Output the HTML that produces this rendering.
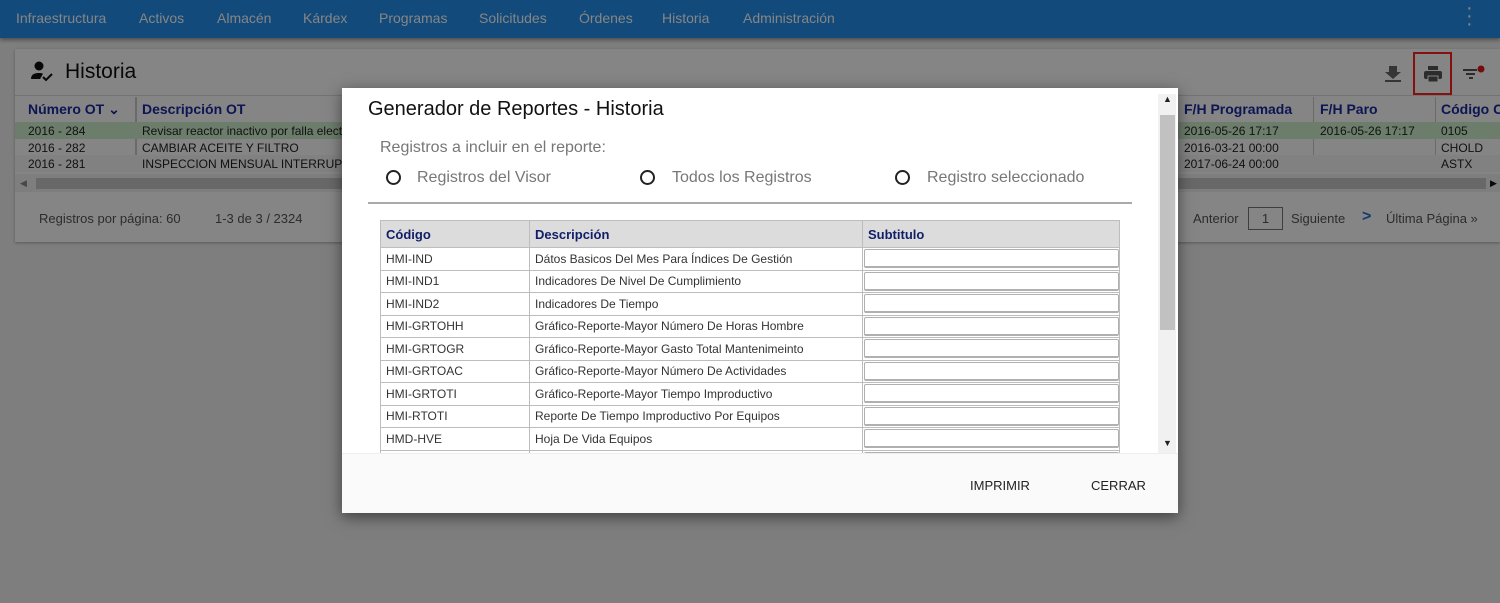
<!DOCTYPE html>
<html><head><meta charset="utf-8"><style>
*{box-sizing:border-box;margin:0;padding:0}
html,body{width:1500px;height:603px;overflow:hidden;background:#7a7a7a}
body{font-family:"Liberation Sans",sans-serif;position:relative}
.a{position:absolute;white-space:nowrap}
.page{left:0;top:0;width:1500px;height:603px;background:#f2f2f2}
.nav{left:0;top:0;width:1500px;height:38px;background:#218eeb;box-shadow:0 2px 4px rgba(0,0,0,.4)}
.nav span{position:absolute;top:10px;font-size:14px;color:#fff}
.card{left:15px;top:49px;width:1485px;height:193px;background:#fff;box-shadow:0 1px 3px rgba(0,0,0,.3)}
.hd{font-size:14px;color:#1a2aa0;font-weight:bold}
.cell{font-size:12px;color:#222}
.ov{left:0;top:0;width:1500px;height:603px;background:rgba(0,0,0,.48)}
.modal{left:342px;top:88px;width:836px;height:425px;background:#fff;box-shadow:0 4px 14px rgba(0,0,0,.5)}
.t td{border:1px solid #bdbdbd;font-size:12px;color:#333;height:22.5px;padding:0 5px}
.t{border-collapse:collapse;position:absolute;left:38px;top:132px;width:740px}
.t th{background:#dcdcdc;color:#101e68;font-size:13px;text-align:left;padding:0 5px;height:27px;border:1px solid #bdbdbd}
.inp{height:19px;border:1px solid #b0b0b0;border-bottom:2px solid #b0b0b0;border-radius:2px;margin:0 -5px 0 -4px}
.radio{width:15px;height:15px;border:2px solid #222;border-radius:50%}
</style></head><body>
<div class="a page"></div>
<div class="a nav">
<span style="left:16px">Infraestructura</span><span style="left:139px">Activos</span><span style="left:217px">Almacén</span><span style="left:303px">Kárdex</span><span style="left:379px">Programas</span><span style="left:479px">Solicitudes</span><span style="left:579px">Órdenes</span><span style="left:662px">Historia</span><span style="left:743px">Administración</span>
<span style="left:1466px;top:4px;font-size:20px;line-height:8px;color:#fff">·<br>·<br>·</span>
</div>
<div class="a card"></div>
<svg class="a" style="left:30px;top:60px" width="24" height="22" viewBox="0 0 24 22"><circle cx="9" cy="6" r="4.5" fill="#111"/><path d="M1 19c0-5 4-6 8-6 2 0 3 .3 4 .7L10 19z" fill="#111"/><path d="M13 17l3 3 6-6" stroke="#111" stroke-width="2" fill="none"/></svg>
<div class="a" style="left:65px;top:60px;font-size:21px;color:#111">Historia</div>
<svg class="a" style="left:1384px;top:65px" width="18" height="18"><path d="M5 1h8v6h4l-8 7-8-7h4z" fill="#666"/><rect x="1" y="15" width="16" height="2" fill="#666"/></svg>
<div class="a" style="left:1413px;top:52px;width:39px;height:43px;border:2px solid #ff2020"></div>
<svg class="a" style="left:1423px;top:65px" width="20" height="18"><rect x="5" y="1" width="10" height="4" fill="#555"/><rect x="1" y="6" width="18" height="8" rx="2" fill="#555"/><rect x="5" y="11" width="10" height="6" fill="#555" stroke="#fff"/></svg>
<svg class="a" style="left:1462px;top:64px" width="24" height="18"><rect x="1" y="5" width="14" height="2" fill="#555"/><rect x="4" y="9" width="9" height="2" fill="#555"/><rect x="7" y="13" width="4" height="2" fill="#555"/><circle cx="19" cy="5" r="3.5" fill="#e01818"/></svg>
<div class="a" style="left:15px;top:95px;width:1485px;height:27px;border-top:1px solid #ddd;background:#fff"></div>
<div class="a hd" style="left:28px;top:101px">Número OT ⌄</div>
<div class="a" style="left:135px;top:97px;width:2px;height:75px;background:#ccc"></div>
<div class="a hd" style="left:142px;top:101px">Descripción OT</div>
<div class="a hd" style="left:1184px;top:101px">F/H Programada</div>
<div class="a hd" style="left:1320px;top:101px">F/H Paro</div>
<div class="a hd" style="left:1441px;top:101px">Código C</div>
<div class="a" style="left:1313px;top:97px;width:1px;height:75px;background:#ccc"></div>
<div class="a" style="left:1435px;top:97px;width:1px;height:75px;background:#ccc"></div>
<div class="a" style="left:15px;top:122px;width:1485px;height:17px;background:#d0f0d0"></div>
<div class="a" style="left:15px;top:155px;width:1485px;height:17px;background:#f7f7f7"></div>
<div class="a cell" style="left:28px;top:124px">2016 - 284</div><div class="a cell" style="left:142px;top:124px">Revisar reactor inactivo por falla electr</div>
<div class="a cell" style="left:28px;top:141px">2016 - 282</div><div class="a cell" style="left:142px;top:141px">CAMBIAR ACEITE Y FILTRO</div>
<div class="a cell" style="left:28px;top:157px">2016 - 281</div><div class="a cell" style="left:142px;top:157px">INSPECCION MENSUAL INTERRUPTOR</div>
<div class="a cell" style="left:1184px;top:124px">2016-05-26 17:17</div><div class="a cell" style="left:1320px;top:124px">2016-05-26 17:17</div><div class="a cell" style="left:1441px;top:124px">0105</div>
<div class="a cell" style="left:1184px;top:141px">2016-03-21 00:00</div><div class="a cell" style="left:1441px;top:141px">CHOLD</div>
<div class="a cell" style="left:1184px;top:157px">2017-06-24 00:00</div><div class="a cell" style="left:1441px;top:157px">ASTX</div>
<div class="a" style="left:15px;top:174px;width:1485px;height:18px;background:#f1f1f1"></div>
<div class="a" style="left:36px;top:178px;width:1450px;height:11px;background:#c8c8c8"></div>
<div class="a" style="left:20px;top:178px;font-size:9px;color:#888">◀</div>
<div class="a" style="left:1490px;top:178px;font-size:9px;color:#111">▶</div>
<div class="a" style="left:39px;top:211px;font-size:13px;color:#555">Registros por página: 60</div>
<div class="a" style="left:215px;top:211px;font-size:13px;color:#555">1-3 de 3 / 2324</div>
<div class="a" style="left:1193px;top:211px;font-size:13px;color:#555">Anterior</div>
<div class="a" style="left:1248px;top:207px;width:35px;height:23px;border:1px solid #777;font-size:13px;color:#555;text-align:center;line-height:21px">1</div>
<div class="a" style="left:1291px;top:211px;font-size:13px;color:#555">Siguiente</div>
<div class="a" style="left:1362px;top:208px;font-size:16px;color:#2a6fd0;font-weight:bold">&gt;</div>
<div class="a" style="left:1386px;top:211px;font-size:13px;color:#555">Última Página »</div>
<div class="a ov"></div>

<div class="a modal">
<div class="a" style="left:26px;top:10px;font-size:20px;color:#111">Generador de Reportes - Historia</div>
<div class="a" style="left:38px;top:51px;font-size:16px;color:#777">Registros a incluir en el reporte:</div>
<div class="a radio" style="left:44px;top:82px"></div><div class="a" style="left:75px;top:81px;font-size:16px;color:#777">Registros del Visor</div>
<div class="a radio" style="left:298px;top:82px"></div><div class="a" style="left:330px;top:81px;font-size:16px;color:#777">Todos los Registros</div>
<div class="a radio" style="left:553px;top:82px"></div><div class="a" style="left:585px;top:81px;font-size:16px;color:#777">Registro seleccionado</div>
<div class="a" style="left:26px;top:114px;width:764px;height:2px;background:#aaa"></div>
<div class="a" style="left:0;top:0;width:836px;height:365px;overflow:hidden">
<table class="t"><tr><th style="width:149px">Código</th><th style="width:333px">Descripción</th><th>Subtitulo</th></tr>
<tr><td>HMI-IND</td><td>Dátos Basicos Del Mes Para Índices De Gestión</td><td><div class="inp"></div></td></tr>
<tr><td>HMI-IND1</td><td>Indicadores De Nivel De Cumplimiento</td><td><div class="inp"></div></td></tr>
<tr><td>HMI-IND2</td><td>Indicadores De Tiempo</td><td><div class="inp"></div></td></tr>
<tr><td>HMI-GRTOHH</td><td>Gráfico-Reporte-Mayor Número De Horas Hombre</td><td><div class="inp"></div></td></tr>
<tr><td>HMI-GRTOGR</td><td>Gráfico-Reporte-Mayor Gasto Total Mantenimeinto</td><td><div class="inp"></div></td></tr>
<tr><td>HMI-GRTOAC</td><td>Gráfico-Reporte-Mayor Número De Actividades</td><td><div class="inp"></div></td></tr>
<tr><td>HMI-GRTOTI</td><td>Gráfico-Reporte-Mayor Tiempo Improductivo</td><td><div class="inp"></div></td></tr>
<tr><td>HMI-RTOTI</td><td>Reporte De Tiempo Improductivo Por Equipos</td><td><div class="inp"></div></td></tr>
<tr><td>HMD-HVE</td><td>Hoja De Vida Equipos</td><td><div class="inp"></div></td></tr>
<tr><td>&nbsp;</td><td></td><td><div class="inp"></div></td></tr>
</table></div>
<div class="a" style="left:816px;top:6px;width:18px;height:359px;background:#f1f1f1"></div>
<div class="a" style="left:818px;top:27px;width:15px;height:215px;background:#c1c1c1"></div>
<div class="a" style="left:821px;top:6px;font-size:9px;color:#222">▲</div>
<div class="a" style="left:821px;top:350px;font-size:9px;color:#222">▼</div>
<div class="a" style="left:0;top:365px;width:836px;height:60px;background:#fafafa;border-top:1px solid #eee"></div>
<div class="a" style="left:628px;top:390px;font-size:13px;color:#222">IMPRIMIR</div>
<div class="a" style="left:749px;top:390px;font-size:13px;color:#222">CERRAR</div>
</div>
</body></html>
